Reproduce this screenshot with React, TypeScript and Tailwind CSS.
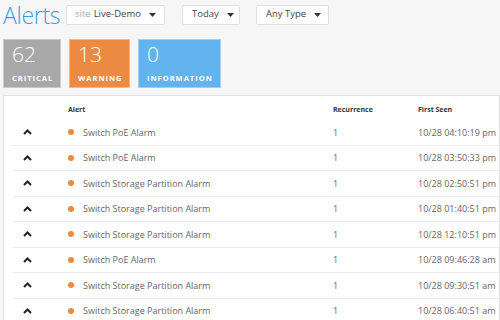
const rows = [
  { name: 'Switch PoE Alarm', count: 1, seen: '10/28 04:10:19 pm' },
  { name: 'Switch PoE Alarm', count: 1, seen: '10/28 03:50:33 pm' },
  { name: 'Switch Storage Partition Alarm', count: 1, seen: '10/28 02:50:51 pm' },
  { name: 'Switch Storage Partition Alarm', count: 1, seen: '10/28 01:40:51 pm' },
  { name: 'Switch Storage Partition Alarm', count: 1, seen: '10/28 12:10:51 pm' },
  { name: 'Switch PoE Alarm', count: 1, seen: '10/28 09:46:28 am' },
  { name: 'Switch Storage Partition Alarm', count: 1, seen: '10/28 09:30:51 am' },
  { name: 'Switch Storage Partition Alarm', count: 1, seen: '10/28 06:40:51 am' },
];

function Caret() {
  return (
    <svg width="7" height="4" viewBox="0 0 7 4" className="shrink-0 ml-2">
      <path d="M0 0h7L3.5 4z" fill="#333" />
    </svg>
  );
}

function Chevron() {
  return (
    <svg width="9" height="6" viewBox="0 0 9 6">
      <path d="M1 5l3.5-3.5L8 5" stroke="#222" strokeWidth="2" fill="none" />
    </svg>
  );
}

export default function App() {
  return (
    <div
      className="w-[500px] h-[320px] overflow-hidden bg-[#f6f6f6]"
      style={{ fontFamily: '"Open Sans", sans-serif' }}
    >
      {/* Header */}
      <div className="flex items-center h-[28px] pl-[3px] pt-[1px] whitespace-nowrap">
        <h1 className="text-[23px] leading-[28px] font-light text-[#3b9be6] tracking-[-0.3px] w-[63px] shrink-0">Alerts</h1>
        <div className="flex items-center shrink-0 h-[20px] w-[99px] bg-white border border-[#e0e0e0] rounded-[2px] px-[8px] text-[9.5px] text-[#444]">
          <span className="text-[#aaa] mr-[3px]">site</span>
          <span>Live-Demo</span>
          <span className="ml-auto flex"><Caret /></span>
        </div>
        <div className="flex items-center justify-between shrink-0 h-[20px] w-[58px] ml-[17px] bg-white border border-[#e0e0e0] rounded-[2px] px-[9px] text-[9.5px] text-[#444]">
          <span>Today</span>
          <Caret />
        </div>
        <div className="flex items-center justify-between shrink-0 h-[20px] w-[73px] ml-[16px] bg-white border border-[#e0e0e0] rounded-[2px] px-[9px] text-[9.5px] text-[#444]">
          <span>Any Type</span>
          <Caret />
        </div>
      </div>

      {/* Stat cards */}
      <div className="flex gap-[8px] pl-[3px] mt-[11px]">
        <div className="w-[58px] h-[49px] bg-[#a8a8a8] border border-[#c9c9c9] px-[8px] pt-[1px] text-white">
          <div className="text-[21px] leading-[26px] font-light">62</div>
          <div className="text-[7.5px] font-bold tracking-[1px] mt-[6px]">CRITICAL</div>
        </div>
        <div className="w-[61px] h-[49px] bg-[#ec8a42] border border-[#f2b88b] px-[8px] pt-[1px] text-white">
          <div className="text-[21px] leading-[26px] font-light">13</div>
          <div className="text-[7.5px] font-bold tracking-[1px] mt-[6px]">WARNING</div>
        </div>
        <div className="w-[83px] h-[49px] bg-[#63b3ee] border border-[#9fd0f4] px-[8px] pt-[1px] text-white">
          <div className="text-[21px] leading-[26px] font-light">0</div>
          <div className="text-[7.5px] font-bold tracking-[1px] mt-[6px]">INFORMATION</div>
        </div>
      </div>

      {/* Table */}
      <div className="ml-[3px] mt-[7px] bg-white border border-[#e2e2e2] pl-[9px] pt-[4px]">
        <div className="grid grid-cols-[55px_265px_85px_1fr] h-[20px] items-center text-[7px] font-bold text-[#333]">
          <div />
          <div>Alert</div>
          <div>Recurrence</div>
          <div>First Seen</div>
        </div>
        {rows.map((r, i) => (
          <div
            key={i}
            className="grid grid-cols-[55px_265px_85px_1fr] h-[25.5px] items-center text-[9px] text-[#666] border-b border-[#ececec] whitespace-nowrap"
          >
            <div className="pl-[10px] flex items-center"><Chevron /></div>
            <div className="flex items-center">
              <span className="w-[6px] h-[6px] rounded-full bg-[#ee8a3c] mr-[9px]" />
              <span>{r.name}</span>
            </div>
            <div>{r.count}</div>
            <div>{r.seen}</div>
          </div>
        ))}
      </div>
    </div>
  );
}
